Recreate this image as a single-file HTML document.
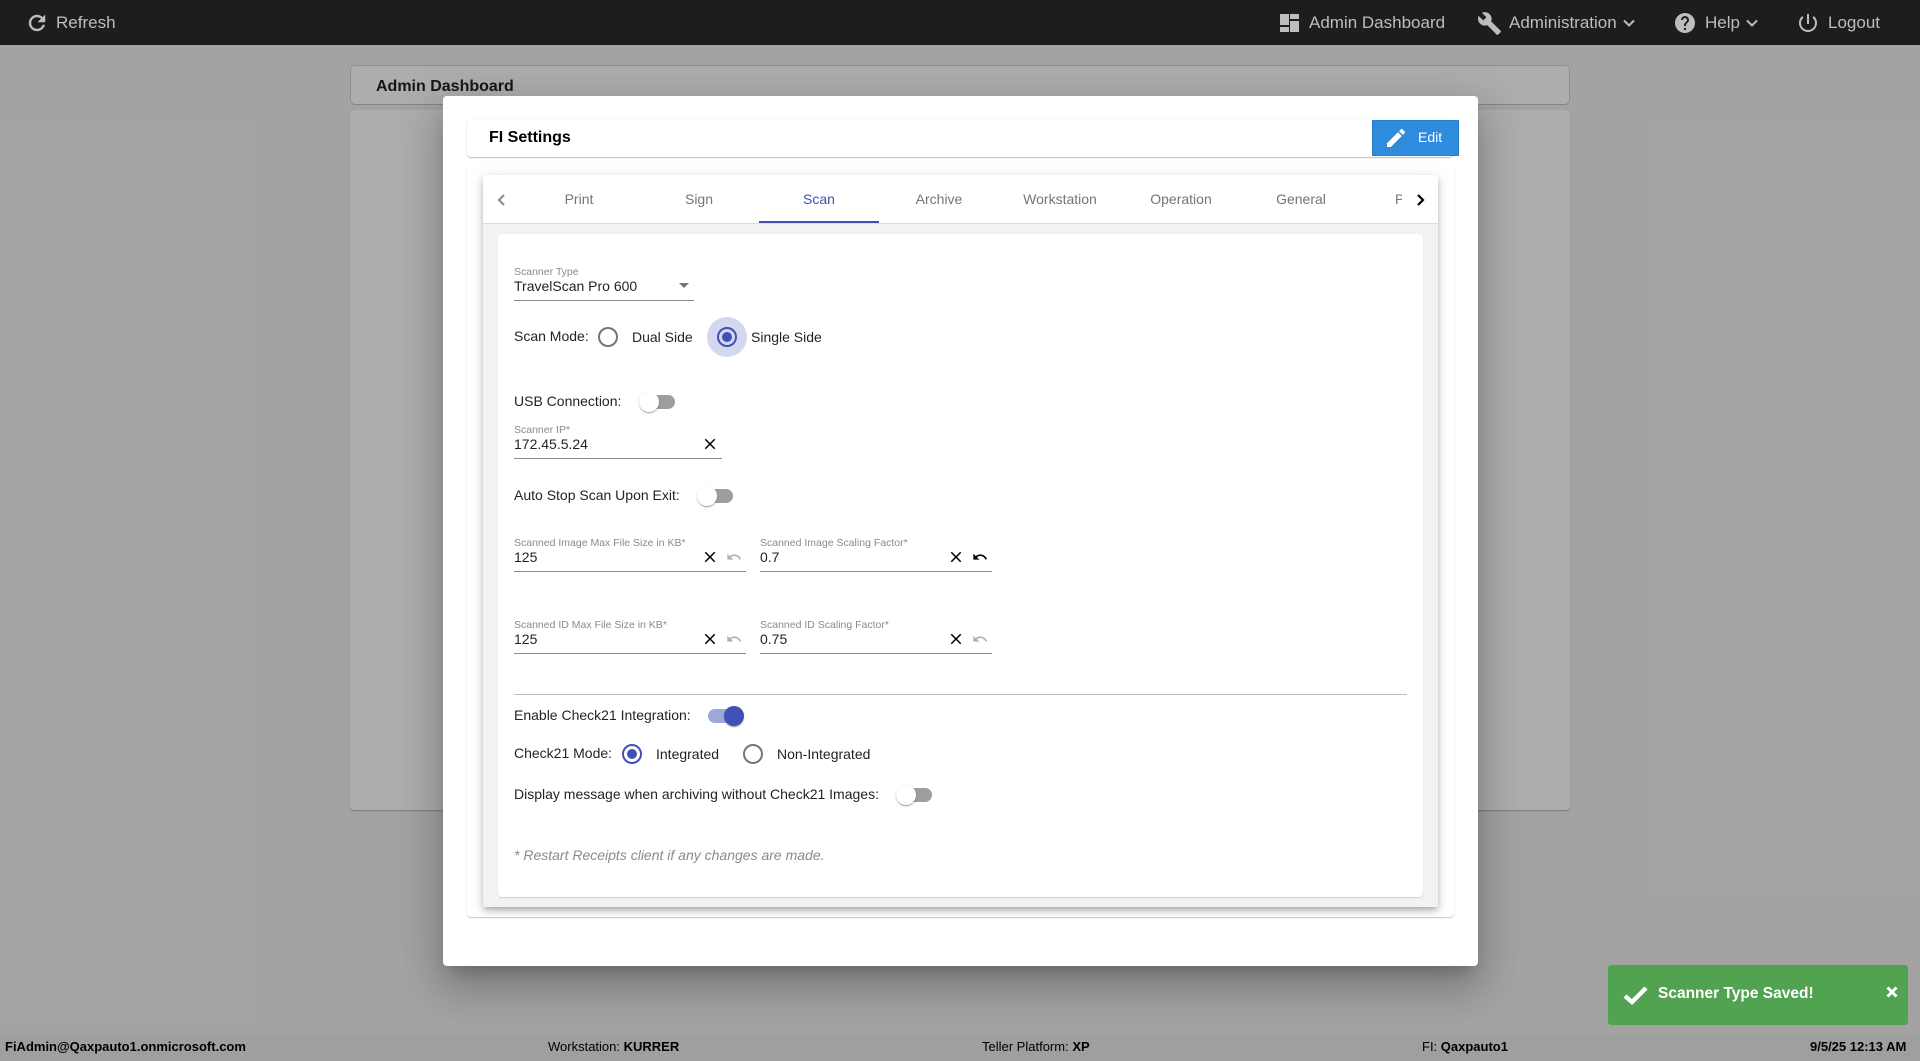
<!DOCTYPE html>
<html><head><meta charset="utf-8"><title>FI Settings</title>
<style>
*{box-sizing:border-box}
html,body{margin:0;padding:0;width:1920px;height:1061px;overflow:hidden;background:#f1f1f1;font-family:"Liberation Sans",Arial,sans-serif}
.a{position:absolute}
.t{position:absolute;white-space:nowrap;line-height:20px;height:20px;font-size:14px;color:rgba(0,0,0,.87)}
.h{position:absolute;white-space:nowrap;line-height:24px;font-size:17px;color:#bdbdbd;top:11px}
.l{position:absolute;white-space:nowrap;line-height:14px;font-size:10.5px;color:#8a8a8a}
.u{position:absolute;height:1px;background:#8c8c8c}
.tab{position:absolute;top:189px;line-height:20px;font-size:14px;color:#757575;width:120px;text-align:center}
.f{position:absolute;top:1039px;line-height:16px;font-size:13px;color:#000;white-space:nowrap}
.f b{font-weight:700}
svg{position:absolute;display:block}
.rd{position:absolute;width:20px;height:20px;border-radius:50%;border:2px solid #757575}
.rd.on{border-color:#3f51b5}
.rd.on:after{content:"";position:absolute;left:3px;top:3px;width:10px;height:10px;border-radius:50%;background:#3f51b5}
.tr{position:absolute;width:36px;height:14px;border-radius:7px;background:#9e9e9e}
.th{position:absolute;width:20px;height:20px;border-radius:50%;background:#fff;box-shadow:0 2px 1px -1px rgba(0,0,0,.2),0 1px 1px 0 rgba(0,0,0,.14),0 1px 3px 0 rgba(0,0,0,.12)}
</style></head><body>
<!-- page underneath -->
<div class="a" style="left:350px;top:65px;width:1220px;height:40px;background:#fff;border:1px solid #d2d2d2;border-bottom-color:#c4c4c4;border-radius:5px"></div>
<div class="a" style="left:376px;top:76px;line-height:22px;font-size:16px;font-weight:700;color:#222;white-space:nowrap">Admin Dashboard</div>
<div class="a" style="left:350px;top:110px;width:1220px;height:700px;background:#fff;border-radius:4px;box-shadow:0 1px 1px rgba(0,0,0,.25)"></div>
<div class="a" style="left:0;top:1035px;width:1920px;height:26px;background:#e9eaeb"></div>
<!-- backdrop -->
<div class="a" style="left:0;top:0;width:1920px;height:1061px;background:rgba(0,0,0,.32)"></div>
<!-- header -->
<div class="a" style="left:0;top:0;width:1920px;height:45px;background:#1d1d1d"></div>
<svg style="left:25px;top:11px" width="24" height="24" viewBox="0 0 24 24" fill="#bdbdbd" stroke="#bdbdbd" stroke-width=".5"><path d="M17.65 6.35C16.2 4.9 14.21 4 12 4c-4.42 0-7.99 3.58-7.99 8s3.57 8 7.99 8c3.73 0 6.84-2.55 7.73-6h-2.08c-.82 2.33-3.04 4-5.65 4-3.31 0-6-2.69-6-6s2.69-6 6-6c1.66 0 3.14.69 4.22 1.78L13 11h7V4l-2.35 2.35z"/></svg>
<div class="h" style="left:56px">Refresh</div>
<svg style="left:1280px;top:14px" width="19" height="18" viewBox="0 0 19 18" fill="#bdbdbd"><path d="M0 0h9v11H0zM0 13h9v5H0zM10 0h9v5h-9zM10 7h9v11h-9z"/></svg>
<div class="h" style="left:1309px">Admin Dashboard</div>
<svg style="left:1477px;top:11px" width="25" height="25" viewBox="0 0 24 24" fill="#bdbdbd"><path d="M22.7 19l-9.1-9.1c.9-2.3.4-5-1.5-6.9-2-2-5-2.4-7.4-1.3L9 6 6 9 1.6 4.7C.4 7.1.9 10.1 2.9 12.1c1.9 1.9 4.6 2.4 6.9 1.5l9.1 9.1c.4.4 1 .4 1.4 0l2.3-2.3c.5-.4.5-1.1.1-1.4z"/></svg>
<div class="h" style="left:1509px">Administration</div>
<svg style="left:1621px;top:15px" width="16" height="16" viewBox="0 0 16 16" fill="none" stroke="#bdbdbd" stroke-width="2"><path d="M3 5.5l5 5 5-5"/></svg>
<svg style="left:1673px;top:11px" width="24" height="24" viewBox="0 0 24 24" fill="#bdbdbd"><path d="M12 2C6.48 2 2 6.48 2 12s4.48 10 10 10 10-4.48 10-10S17.52 2 12 2zm1 17h-2v-2h2v2zm2.07-7.75l-.9.92C13.45 12.9 13 13.5 13 15h-2v-.5c0-1.1.45-2.1 1.17-2.83l1.24-1.26c.37-.36.59-.86.59-1.41 0-1.1-.9-2-2-2s-2 .9-2 2H8c0-2.21 1.79-4 4-4s4 1.79 4 4c0 .88-.36 1.68-.93 2.25z"/></svg>
<div class="h" style="left:1705px">Help</div>
<svg style="left:1744px;top:15px" width="16" height="16" viewBox="0 0 16 16" fill="none" stroke="#bdbdbd" stroke-width="2"><path d="M3 5.5l5 5 5-5"/></svg>
<svg style="left:1796px;top:11px" width="24" height="24" viewBox="0 0 24 24" fill="#bdbdbd"><path d="M13 3h-2v10h2V3zm4.83 2.17l-1.42 1.42C17.99 7.86 19 9.81 19 12c0 3.87-3.13 7-7 7s-7-3.13-7-7c0-2.19 1.01-4.14 2.58-5.42L6.17 5.17C4.23 6.82 3 9.26 3 12c0 4.97 4.03 9 9 9s9-4.03 9-9c0-2.74-1.23-5.18-3.17-6.83z"/></svg>
<div class="h" style="left:1828px">Logout</div>
<!-- footer text -->
<div class="f" style="left:5px;font-weight:700">FiAdmin@Qaxpauto1.onmicrosoft.com</div>
<div class="f" style="left:548px">Workstation: <b>KURRER</b></div>
<div class="f" style="left:982px">Teller Platform: <b>XP</b></div>
<div class="f" style="left:1422px">FI: <b>Qaxpauto1</b></div>
<div class="f" style="left:1810px;font-weight:700">9/5/25 12:13 AM</div>
<!-- modal -->
<div class="a" style="left:443px;top:96px;width:1035px;height:870px;background:#fff;border-radius:4px;box-shadow:0 11px 15px -7px rgba(0,0,0,.2),0 24px 38px 3px rgba(0,0,0,.14),0 9px 46px 8px rgba(0,0,0,.12)"></div>
<div class="a" style="left:467px;top:120px;width:986px;height:37px;background:#fff;border-radius:4px;box-shadow:0 1px 1px rgba(0,0,0,.25),0 0 2px rgba(0,0,0,.05)"></div>
<div class="a" style="left:489px;top:128px;line-height:20px;font-size:16px;font-weight:700;color:#000;white-space:nowrap">FI Settings</div>
<div class="a" style="left:467px;top:164px;width:987px;height:753px;background:#fff;border-radius:4px;box-shadow:0 1px 1px rgba(0,0,0,.2),0 0 2px rgba(0,0,0,.04)"></div>
<div class="a" style="left:1372px;top:120px;width:87px;height:36px;background:#2f8cdc;border:1px solid #2a7fc9"></div>
<svg style="left:1384px;top:126px" width="24" height="24" viewBox="0 0 24 24" fill="#fff"><path d="M3 17.25V21h3.75L17.81 9.94l-3.75-3.75L3 17.25zM20.71 7.04c.39-.39.39-1.02 0-1.41l-2.34-2.34c-.39-.39-1.02-.39-1.41 0l-1.83 1.83 3.75 3.75 1.83-1.83z"/></svg>
<div class="a" style="left:1418px;top:127px;line-height:20px;font-size:14px;color:#fff">Edit</div>
<!-- tab card -->
<div class="a" style="left:483px;top:175px;width:955px;height:732px;background:#f2f2f2;box-shadow:0 3px 5px -1px rgba(0,0,0,.2),0 5px 8px 0 rgba(0,0,0,.12),0 1px 14px 0 rgba(0,0,0,.1)"></div>
<div class="a" style="left:483px;top:175px;width:955px;height:49px;background:#fff;border-bottom:1px solid #dcdcdc"></div>
<svg style="left:492px;top:190px" width="20" height="20" viewBox="0 0 20 20" fill="none" stroke="#8a8a8a" stroke-width="2"><path d="M12 5l-5 5 5 5"/></svg>
<div class="tab" style="left:519px">Print</div>
<div class="tab" style="left:639px">Sign</div>
<div class="tab" style="left:759px;color:#3f51b5">Scan</div>
<div class="tab" style="left:879px">Archive</div>
<div class="tab" style="left:1000px">Workstation</div>
<div class="tab" style="left:1121px">Operation</div>
<div class="tab" style="left:1241px">General</div>
<div class="a" style="left:1395px;top:189px;width:7px;height:20px;overflow:hidden;line-height:20px;font-size:14px;color:#757575">P</div>
<svg style="left:1410px;top:190px" width="20" height="20" viewBox="0 0 20 20" fill="none" stroke="#000" stroke-width="2.2"><path d="M8 5l5 5-5 5"/></svg>
<div class="a" style="left:759px;top:221px;width:120px;height:2px;background:#3f51b5"></div>
<!-- inner white -->
<div class="a" style="left:498px;top:234px;width:925px;height:663px;background:#fff;border-radius:4px;box-shadow:0 1px 1px rgba(0,0,0,.14)"></div>
<div class="l" style="left:514px;top:265px">Scanner Type</div>
<div class="t" style="left:514px;top:276px">TravelScan Pro 600</div>
<svg style="left:679px;top:283px" width="10" height="5" viewBox="0 0 10 5" fill="#757575"><path d="M0 0h10L5 5z"/></svg>
<div class="u" style="left:514px;top:300px;width:180px"></div>
<div class="t" style="left:514px;top:326px">Scan Mode:</div>
<div class="rd" style="left:598px;top:327px"></div>
<div class="t" style="left:632px;top:327px">Dual Side</div>
<div class="a" style="left:707px;top:317px;width:40px;height:40px;border-radius:50%;background:#d3d8ee"></div>
<div class="rd on" style="left:717px;top:327px"></div>
<div class="t" style="left:751px;top:327px">Single Side</div>
<div class="t" style="left:514px;top:391px">USB Connection:</div>
<div class="tr" style="left:639px;top:395px"></div><div class="th" style="left:639px;top:392px"></div>
<div class="l" style="left:514px;top:423px">Scanner IP*</div>
<div class="t" style="left:514px;top:434px">172.45.5.24</div>
<svg style="left:701px;top:435px" width="18" height="18" viewBox="0 0 24 24" fill="#000"><path d="M19 6.41L17.59 5 12 10.59 6.41 5 5 6.41 10.59 12 5 17.59 6.41 19 12 13.41 17.59 19 19 17.59 13.41 12z"/></svg>
<div class="u" style="left:514px;top:458px;width:208px"></div>
<div class="t" style="left:514px;top:485px">Auto Stop Scan Upon Exit:</div>
<div class="tr" style="left:697px;top:489px"></div><div class="th" style="left:697px;top:486px"></div>
<div class="l" style="left:514px;top:536px">Scanned Image Max File Size in KB*</div>
<div class="t" style="left:514px;top:547px">125</div>
<svg style="left:701px;top:548px" width="18" height="18" viewBox="0 0 24 24" fill="#000"><path d="M19 6.41L17.59 5 12 10.59 6.41 5 5 6.41 10.59 12 5 17.59 6.41 19 12 13.41 17.59 19 19 17.59 13.41 12z"/></svg>
<svg style="left:726px;top:549px" width="16" height="16" viewBox="0 0 24 24" fill="#b0b0b0"><path d="M12.5 8c-2.65 0-5.05.99-6.9 2.6L2 7v9h9l-3.62-3.62c1.39-1.16 3.16-1.88 5.12-1.88 3.54 0 6.55 2.31 7.6 5.5l2.37-.78C21.08 11.03 17.15 8 12.5 8z"/></svg>
<div class="u" style="left:514px;top:571px;width:232px"></div>
<div class="l" style="left:760px;top:536px">Scanned Image Scaling Factor*</div>
<div class="t" style="left:760px;top:547px">0.7</div>
<svg style="left:947px;top:548px" width="18" height="18" viewBox="0 0 24 24" fill="#000"><path d="M19 6.41L17.59 5 12 10.59 6.41 5 5 6.41 10.59 12 5 17.59 6.41 19 12 13.41 17.59 19 19 17.59 13.41 12z"/></svg>
<svg style="left:972px;top:549px" width="16" height="16" viewBox="0 0 24 24" fill="#000"><path d="M12.5 8c-2.65 0-5.05.99-6.9 2.6L2 7v9h9l-3.62-3.62c1.39-1.16 3.16-1.88 5.12-1.88 3.54 0 6.55 2.31 7.6 5.5l2.37-.78C21.08 11.03 17.15 8 12.5 8z"/></svg>
<div class="u" style="left:760px;top:571px;width:232px"></div>
<div class="l" style="left:514px;top:618px">Scanned ID Max File Size in KB*</div>
<div class="t" style="left:514px;top:629px">125</div>
<svg style="left:701px;top:630px" width="18" height="18" viewBox="0 0 24 24" fill="#000"><path d="M19 6.41L17.59 5 12 10.59 6.41 5 5 6.41 10.59 12 5 17.59 6.41 19 12 13.41 17.59 19 19 17.59 13.41 12z"/></svg>
<svg style="left:726px;top:631px" width="16" height="16" viewBox="0 0 24 24" fill="#b0b0b0"><path d="M12.5 8c-2.65 0-5.05.99-6.9 2.6L2 7v9h9l-3.62-3.62c1.39-1.16 3.16-1.88 5.12-1.88 3.54 0 6.55 2.31 7.6 5.5l2.37-.78C21.08 11.03 17.15 8 12.5 8z"/></svg>
<div class="u" style="left:514px;top:653px;width:232px"></div>
<div class="l" style="left:760px;top:618px">Scanned ID Scaling Factor*</div>
<div class="t" style="left:760px;top:629px">0.75</div>
<svg style="left:947px;top:630px" width="18" height="18" viewBox="0 0 24 24" fill="#000"><path d="M19 6.41L17.59 5 12 10.59 6.41 5 5 6.41 10.59 12 5 17.59 6.41 19 12 13.41 17.59 19 19 17.59 13.41 12z"/></svg>
<svg style="left:972px;top:631px" width="16" height="16" viewBox="0 0 24 24" fill="#b0b0b0"><path d="M12.5 8c-2.65 0-5.05.99-6.9 2.6L2 7v9h9l-3.62-3.62c1.39-1.16 3.16-1.88 5.12-1.88 3.54 0 6.55 2.31 7.6 5.5l2.37-.78C21.08 11.03 17.15 8 12.5 8z"/></svg>
<div class="u" style="left:760px;top:653px;width:232px"></div>
<div class="a" style="left:514px;top:694px;width:893px;height:1px;background:#bdbdbd"></div>
<div class="t" style="left:514px;top:705px">Enable Check21 Integration:</div>
<div class="tr" style="left:708px;top:709px;background:#9fa8da"></div><div class="th" style="left:724px;top:706px;background:#3f51b5"></div>
<div class="t" style="left:514px;top:743px">Check21 Mode:</div>
<div class="rd on" style="left:622px;top:744px"></div>
<div class="t" style="left:656px;top:744px">Integrated</div>
<div class="rd" style="left:743px;top:744px"></div>
<div class="t" style="left:777px;top:744px">Non-Integrated</div>
<div class="t" style="left:514px;top:784px">Display message when archiving without Check21 Images:</div>
<div class="tr" style="left:896px;top:788px"></div><div class="th" style="left:896px;top:785px"></div>
<div class="t" style="left:514px;top:845px;font-style:italic;color:#8a8a8a">* Restart Receipts client if any changes are made.</div>
<!-- toast -->
<div class="a" style="left:1608px;top:965px;width:300px;height:60px;background:#51a351;border-radius:3px"></div>
<svg style="left:1621px;top:981px" width="28" height="28" viewBox="0 0 28 28" fill="none" stroke="#fff" stroke-width="4.4"><path d="M4 15l7 6L25 7"/></svg>
<div class="a" style="left:1658px;top:984px;line-height:20px;font-size:15.5px;font-weight:700;color:#fff;white-space:nowrap">Scanner Type Saved!</div>
<svg style="left:1886px;top:986px" width="12" height="12" viewBox="0 0 12 12" fill="none" stroke="#fff" stroke-width="3"><path d="M1.5 1.5l9 9M10.5 1.5l-9 9"/></svg>
</body></html>
